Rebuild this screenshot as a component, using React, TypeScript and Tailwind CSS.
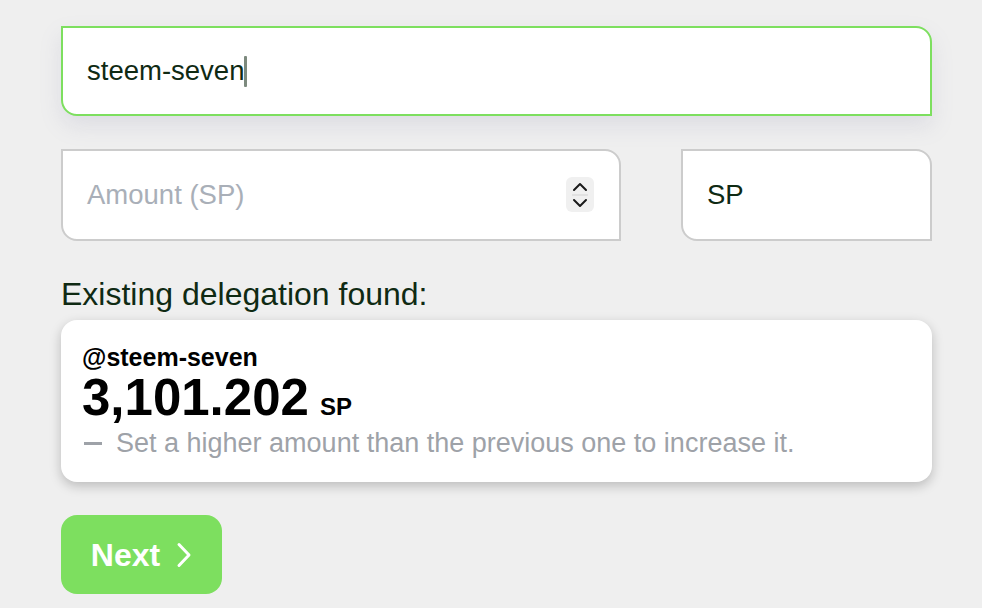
export default function App() {
  return (
    <div className="min-h-[608px] bg-[#efefef] font-['Liberation_Sans',Arial,sans-serif]">
      <div className="w-[871px] ml-[61px] pt-[26px]">
        {/* Recipient */}
        <div className="h-[90px] flex items-center px-[24px] bg-white border-2 border-[#7ddf5f] rounded-tr-[16px] rounded-bl-[16px] shadow-[0_10px_22px_rgba(130,130,170,0.16)]">
          <span className="text-[27.5px] text-[#0f2a13]">steem-seven</span>
          <span className="w-[3px] h-[31px] bg-[#7d8a7e] rounded-[1px]" />
        </div>

        {/* Amount + unit */}
        <div className="mt-[33px] flex gap-[60px]">
          <div className="relative w-[560px] h-[92px] flex items-center px-[24px] bg-white border-2 border-[#cccccc] rounded-tr-[16px] rounded-bl-[16px]">
            <span className="text-[27.5px] text-[#a9afb8]">Amount (SP)</span>
            <div className="absolute right-[25px] top-[26px] w-[28px] h-[35px] rounded-[6px] bg-[#f0f0f0] flex items-center justify-center">
              <svg width="18" height="32" viewBox="0 0 18 32" fill="none">
                <path d="M3 11 L9 5 L15 11" stroke="#1a1a1a" strokeWidth="2" strokeLinecap="round" strokeLinejoin="round" />
                <line x1="1" y1="16" x2="17" y2="16" stroke="#d2d2d2" strokeWidth="1" />
                <path d="M3 21 L9 27 L15 21" stroke="#1a1a1a" strokeWidth="2" strokeLinecap="round" strokeLinejoin="round" />
              </svg>
            </div>
          </div>
          <div className="w-[251px] h-[92px] flex items-center px-[24px] bg-white border-2 border-[#cccccc] rounded-tr-[16px] rounded-bl-[16px]">
            <span className="text-[27.5px] text-[#0f2a13]">SP</span>
          </div>
        </div>

        {/* Existing delegation */}
        <h2 className="mt-[35px] mb-[8px] text-[32px] leading-[36px] text-[#0f2a13]">
          Existing delegation found:
        </h2>
        <div className="bg-white rounded-[16px] shadow-[0_4px_12px_rgba(0,0,0,0.22)] pl-[21px] pt-[23px] pb-[23px]">
          <div className="text-[25px] leading-[28px] font-bold text-black">@steem-seven</div>
          <div className="mt-[2px] flex items-baseline gap-[11px] leading-[50px] text-black font-bold">
            <span className="text-[51px]">3,101.202</span>
            <span className="text-[24px]">SP</span>
          </div>
          <div className="-mt-[5px] flex items-center text-[27px] leading-[32px] text-[#9ea2a8]">
            <span className="ml-[2px] mr-[14px] w-[18px] h-[3px] bg-[#9ea2a8]" />
            Set a higher amount than the previous one to increase it.
          </div>
        </div>

        {/* Next */}
        <button className="mt-[33px] w-[161px] h-[79px] flex items-center justify-center gap-[16px] bg-[#7ddf5f] rounded-[16px] text-white text-[32px] font-bold">
          Next
          <svg width="16" height="26" viewBox="0 0 16 26" fill="none">
            <path d="M3 2.5 L13 13 L3 23.5" stroke="white" strokeWidth="3" strokeLinecap="round" strokeLinejoin="round" />
          </svg>
        </button>
      </div>
    </div>
  );
}
